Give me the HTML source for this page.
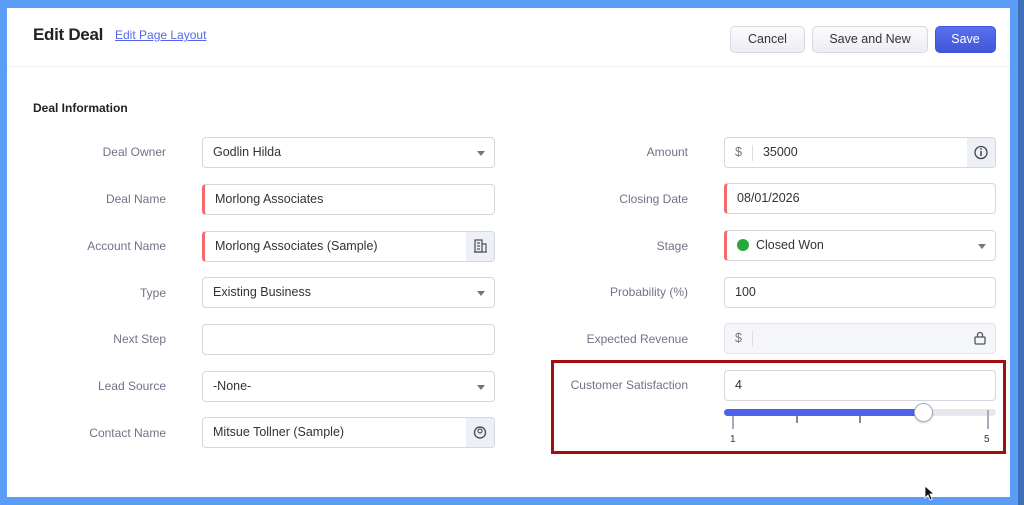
<!DOCTYPE html>
<html><head><meta charset="utf-8"><style>
*{box-sizing:border-box;margin:0;padding:0}
body{width:1024px;height:505px;background:#5b9cf5;position:relative;overflow:hidden;font-family:"Liberation Sans",sans-serif;color:#333}
.panel{position:absolute;left:7px;top:8px;width:1003px;height:489px;background:#fff}
.rstrip{position:absolute;left:1018px;top:0;width:6px;height:505px;background:#3f6fb8}
.hdr{position:absolute;left:7px;top:66px;width:1003px;height:1px;background:#eef0f3}
h1{position:absolute;left:33px;top:25px;font-size:17px;font-weight:bold;color:#222;letter-spacing:-0.3px}
.lnk{position:absolute;left:115px;top:28px;font-size:12px;color:#5567e6;text-decoration:underline}
.btn{position:absolute;top:26px;height:27px;border:1px solid #d6d9e0;border-radius:5px;background:linear-gradient(#fbfbfd,#eceef3);font-size:12.5px;color:#333;text-align:center;line-height:25px}
.sec{position:absolute;left:33px;top:101px;font-size:12px;font-weight:bold;color:#222}
.lab{position:absolute;font-size:12px;color:#6e7488;text-align:right}
.in{position:absolute;height:31px;border:1px solid #d4d6e0;border-radius:4px;background:#fff;font-size:12.5px;color:#333;line-height:29px;padding-left:10px}
.req{border-left:3px solid #f26b6b}
.dd:after{content:"";position:absolute;right:9px;top:13px;border:4px solid transparent;border-top:5px solid #777}
.ic{position:absolute;right:0;top:0;width:28px;height:29px;background:#eef0f7;border-radius:0 4px 4px 0}
.box{position:absolute;left:551px;top:360px;width:455px;height:94px;border:3px solid #a30d0d}
</style></head><body>
<div class="panel"></div><div class="rstrip"></div><div class="hdr"></div>
<h1>Edit Deal</h1><div class="lnk">Edit Page Layout</div>
<div class="btn" style="left:730px;width:75px">Cancel</div>
<div class="btn" style="left:812px;width:116px">Save and New</div>
<div class="btn" style="left:935px;width:61px;background:linear-gradient(#5a6ff0,#4256d8);border-color:#4256d8;color:#fff">Save</div>
<div class="sec">Deal Information</div>

<div class="lab" style="left:40px;width:126px;top:145px">Deal Owner</div>
<div class="in dd" style="left:202px;top:137px;width:293px">Godlin Hilda</div>
<div class="lab" style="left:40px;width:126px;top:192px">Deal Name</div>
<div class="in req" style="left:202px;top:184px;width:293px">Morlong Associates</div>
<div class="lab" style="left:40px;width:126px;top:239px">Account Name</div>
<div class="in req" style="left:202px;top:231px;width:293px">Morlong Associates (Sample)<div class="ic"><svg width="28" height="29"><rect x="9" y="8" width="7" height="12" fill="none" stroke="#555" stroke-width="1.3"/><path d="M16 12h4v8M8 20h13M11 11h3M11 14h3M11 17h3" stroke="#555" stroke-width="1.2" fill="none"/></svg></div></div>
<div class="lab" style="left:40px;width:126px;top:286px">Type</div>
<div class="in dd" style="left:202px;top:277px;width:293px">Existing Business</div>
<div class="lab" style="left:40px;width:126px;top:332px">Next Step</div>
<div class="in" style="left:202px;top:324px;width:293px"></div>
<div class="lab" style="left:40px;width:126px;top:379px">Lead Source</div>
<div class="in dd" style="left:202px;top:371px;width:293px">-None-</div>
<div class="lab" style="left:40px;width:126px;top:426px">Contact Name</div>
<div class="in" style="left:202px;top:417px;width:293px">Mitsue Tollner (Sample)<div class="ic"><svg width="28" height="29"><circle cx="14" cy="14.5" r="5.5" fill="none" stroke="#555" stroke-width="1.4"/><circle cx="14" cy="13" r="2" fill="none" stroke="#555" stroke-width="1.2"/></svg></div></div>

<div class="lab" style="left:540px;width:148px;top:145px">Amount</div>
<div class="in" style="left:724px;top:137px;width:272px"><span style="color:#777">$</span><span style="display:inline-block;width:1px;height:16px;background:#ddd;margin:0 10px;vertical-align:middle"></span>35000<div class="ic"><svg width="28" height="29"><circle cx="14" cy="14.5" r="6" fill="none" stroke="#444" stroke-width="1.3"/><path d="M14 13v5" stroke="#444" stroke-width="1.5"/><circle cx="14" cy="11" r=".9" fill="#444"/></svg></div></div>
<div class="lab" style="left:540px;width:148px;top:192px">Closing Date</div>
<div class="in req" style="left:724px;top:183px;width:272px">08/01/2026</div>
<div class="lab" style="left:540px;width:148px;top:239px">Stage</div>
<div class="in req dd" style="left:724px;top:230px;width:272px"><span style="display:inline-block;width:12px;height:12px;border-radius:50%;background:#27a83a;vertical-align:-2px;margin-right:7px"></span>Closed Won</div>
<div class="lab" style="left:540px;width:148px;top:285px">Probability (%)</div>
<div class="in" style="left:724px;top:277px;width:272px">100</div>
<div class="lab" style="left:540px;width:148px;top:332px">Expected Revenue</div>
<div class="in" style="left:724px;top:323px;width:272px;background:#f5f6f9;border-color:#e3e5ec"><span style="color:#777">$</span><span style="display:inline-block;width:1px;height:16px;background:#ddd;margin:0 10px;vertical-align:middle"></span><svg style="position:absolute;right:8px;top:7px" width="14" height="15"><rect x="2" y="6" width="10" height="7" rx="1" fill="none" stroke="#555" stroke-width="1.3"/><path d="M4.5 6V4a2.5 2.5 0 0 1 5 0v2" fill="none" stroke="#555" stroke-width="1.3"/></svg></div>

<div class="box"></div>
<div class="lab" style="left:556px;width:132px;top:378px">Customer Satisfaction</div>
<div class="in" style="left:724px;top:370px;width:272px">4</div>
<div style="position:absolute;left:724px;top:409px;width:272px;height:7px;background:#e6e8ee;border-radius:4px"></div>
<div style="position:absolute;left:724px;top:409px;width:200px;height:7px;background:#4f63ea;border-radius:4px"></div>
<div style="position:absolute;left:732px;top:416px;width:2px;height:13px;background:#aab"></div>
<div style="position:absolute;left:796px;top:416px;width:2px;height:7px;background:#889"></div>
<div style="position:absolute;left:859px;top:416px;width:2px;height:7px;background:#889"></div>
<div style="position:absolute;left:987px;top:410px;width:2px;height:19px;background:#aab"></div>
<div style="position:absolute;left:914px;top:403px;width:19px;height:19px;border-radius:50%;background:#fff;border:1.5px solid #aab;box-shadow:0 1px 2px rgba(0,0,0,.2)"></div>
<div style="position:absolute;left:730px;top:434px;font-size:10px;color:#333">1</div>
<div style="position:absolute;left:984px;top:434px;font-size:10px;color:#333">5</div>
<svg style="position:absolute;left:924px;top:485px" width="12" height="16"><path d="M1 1v12l3-3 2 5 2-1-2-5h4z" fill="#111" stroke="#fff" stroke-width=".8"/></svg>
</body></html>
